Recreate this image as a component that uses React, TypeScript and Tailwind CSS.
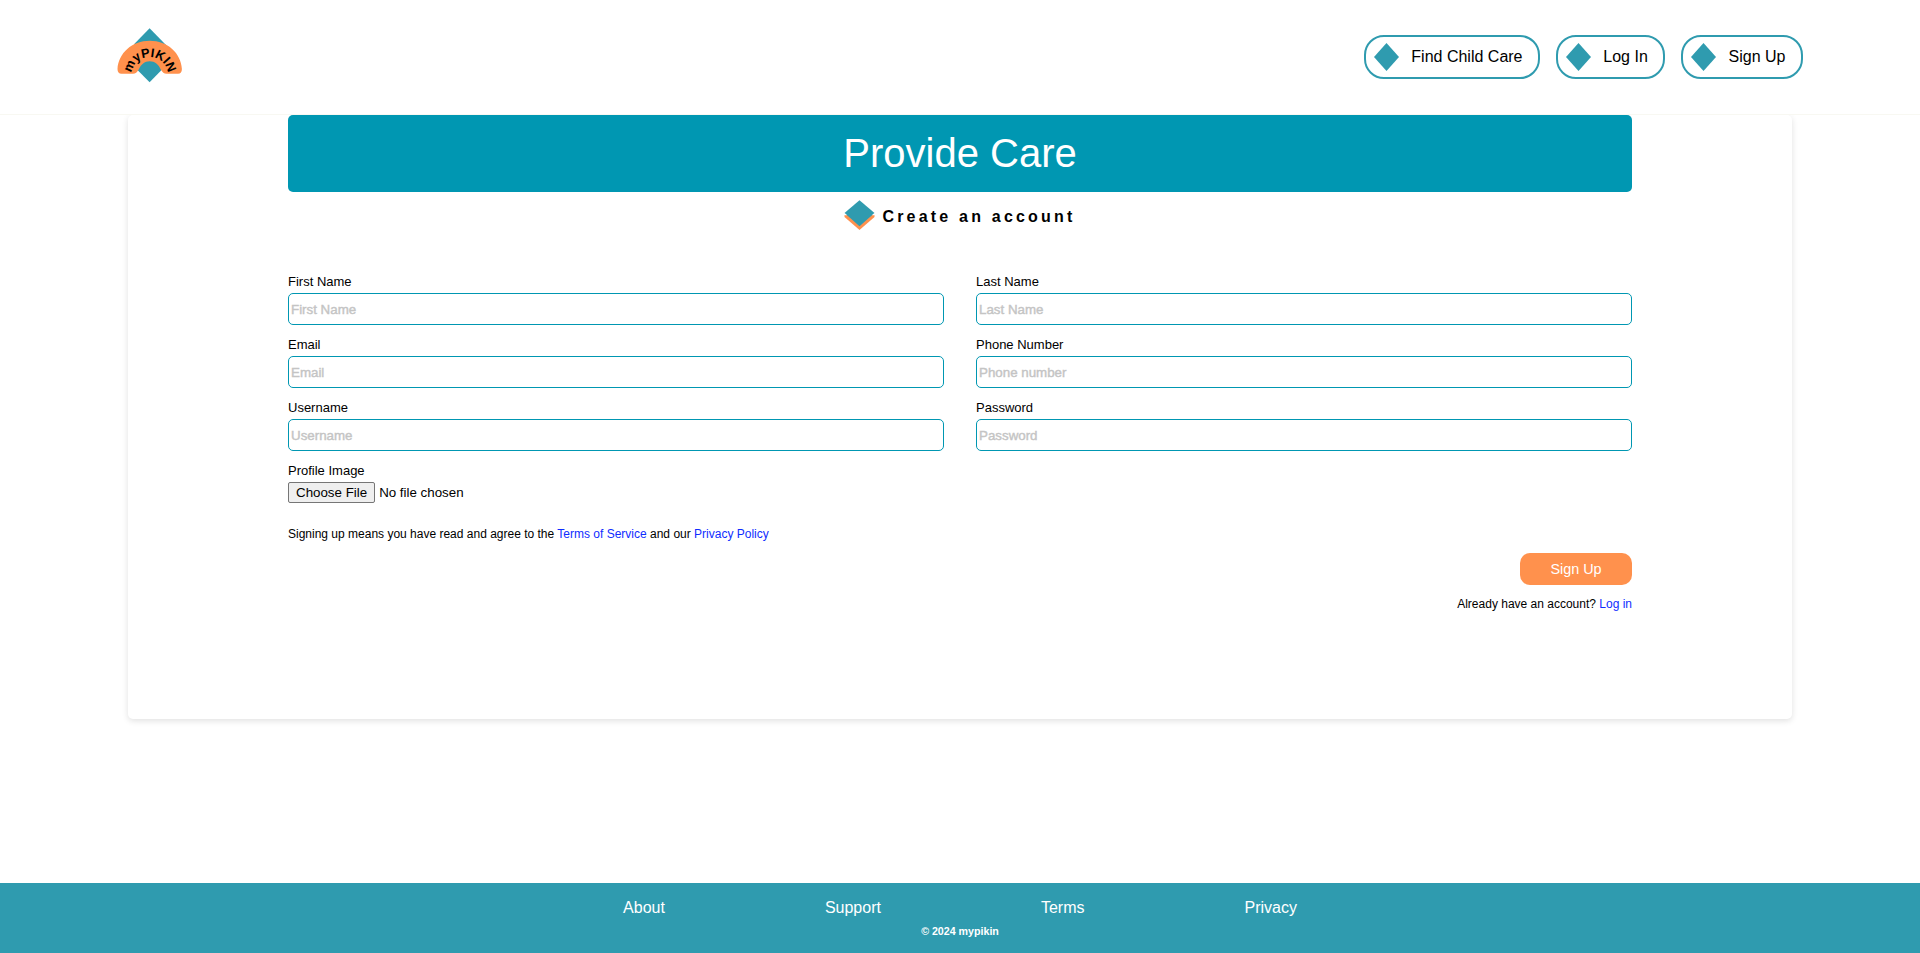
import type { ReactNode } from "react";

const FONT = "font-['Liberation_Sans',Arial,sans-serif]";

function Logo() {
  return (
    <svg width="66" height="56" viewBox="0 0 66 56" className="mb-0.5 block" aria-label="myPIKIN">
      <defs>
        <clipPath id="mid">
          <rect x="17" y="0" width="32" height="56" />
        </clipPath>
        <path id="arc" d="M14.4 47.3A18.300 18.300 0 0 1 51 47.300" />
      </defs>
      <path d="M32.600 0.300L59 27.300L32.600 54.300L6 27.300Z" fill="#2f9baf" clipPath="url(#mid)" />
      <path
        d="M4.500 45.700Q0.500 45.700 0.500 41C1.500 25 15 12.700 32.700 12.700C50.500 12.700 64 25 64.900 41Q64.900 45.700 61 45.700H49.500Q46 45.700 43.800 41.500C41.500 36.500 38 33.300 32.700 33.300C27.500 33.300 24 36.500 21.700 41.500Q19.500 45.700 16 45.700Z"
        fill="#ff914d"
      />
      <text className={FONT} fontSize="12.8" fontWeight="700" fill="#000">
        <textPath href="#arc" startOffset="50%" textAnchor="middle">
          myPIKIN
        </textPath>
      </text>
    </svg>
  );
}

function NavPill({ children }: { children: ReactNode }) {
  return (
    <a
      href="#"
      className="flex h-11 items-center gap-[12.8px] rounded-[20px] border-2 border-[#2f9baf] pr-[15.500px] pl-[7.5px]"
    >
      <svg width="25" height="28" viewBox="0 0 25 28">
        <path d="M12.500 0L25 14L12.500 28L0 14Z" fill="#2f9baf" />
      </svg>
      <span>{children}</span>
    </a>
  );
}

function Field({ label, placeholder, type = "text" }: { label: string; placeholder: string; type?: string }) {
  return (
    <label className="flex flex-col text-[13px]">
      <span className="mb-[5px] leading-[13px]">{label}</span>
      <input
        type={type}
        placeholder={placeholder}
        className="h-8 rounded-[5px] border border-[#0097b2] bg-white px-0.5 text-[13.333px] placeholder:text-[#c4c4c4] placeholder:[-webkit-text-stroke:0.4px_#c4c4c4]"
      />
    </label>
  );
}

export default function App() {
  return (
    <div className={`${FONT} flex h-[953px] flex-col overflow-hidden bg-white text-base text-black`}>
      <header className="flex h-[115px] shrink-0 items-center justify-between border-b border-[#f8f8f2] pr-[117px] pl-[117px]">
        <Logo />
        <nav className="flex gap-4">
          <NavPill>Find Child Care</NavPill>
          <NavPill>Log In</NavPill>
          <NavPill>Sign Up</NavPill>
        </nav>
      </header>

      <div className="overflow-hidden pb-4">
        <main className="mx-32 h-[604px] rounded-[5px] bg-white px-40 shadow-[0_2px_6px_rgba(0,0,0,0.12)]">
          <h1 className="flex h-[77px] items-center justify-center rounded-[5px] bg-[#0097b2] pb-0.5 text-[40px] text-white">
            Provide Care
          </h1>
          <div className="mt-2 flex items-center justify-center gap-[7.5px] pr-[0.5px]">
            <svg width="31" height="30" viewBox="0 0 31 30">
              <path d="M0.500 15L30.500 15L30.500 17L15.500 30L0.500 17Z" fill="#ff914d" />
              <path d="M15.500 0.200L30.500 13L15.500 26.200L0.500 13Z" fill="#2f9baf" />
              <path d="M0.500 13L3 15.200L0.500 15.200ZM30.500 13L28 15.200L30.500 15.200Z" fill="#fff" />
            </svg>
            <h2 className="pt-1 font-bold tracking-[0.2em]">Create an account</h2>
          </div>

          <form className="mt-[45px]">
            <div className="grid grid-cols-2 gap-x-8 gap-y-[13px]">
              <Field label="First Name" placeholder="First Name" />
              <Field label="Last Name" placeholder="Last Name" />
              <Field label="Email" placeholder="Email" type="email" />
              <Field label="Phone Number" placeholder="Phone number" type="tel" />
              <Field label="Username" placeholder="Username" />
              <Field label="Password" placeholder="Password" type="password" />
              <label className="flex flex-col text-[13px]">
                <span className="mb-[5px] leading-[13px]">Profile Image</span>
                <input
                  type="file"
                  className="h-[21px] text-[13.333px] leading-[15px] file:h-[21px] file:rounded-[2px] file:border file:border-solid file:border-[#767676] file:bg-[#efefef] file:px-[7px] file:text-[13.333px] file:leading-[15px]"
                />
              </label>
            </div>
            <p className="mt-[23px] text-xs">
              Signing up means you have read and agree to the{" "}
              <a href="#" className="text-[#0f2dff]">Terms of Service</a> and our{" "}
              <a href="#" className="text-[#0f2dff]">Privacy Policy</a>
            </p>
            <div className="mt-[11px] flex flex-col items-end gap-[11px]">
              <button type="button" className="h-8 w-28 rounded-[10px] bg-[#ff914d] pt-0.5 text-[14.4px] text-white">
                Sign Up
              </button>
              <p className="text-xs">
                Already have an account? <a href="#" className="text-[#0f2dff]">Log in</a>
              </p>
            </div>
          </form>
        </main>
      </div>

      <footer className="mt-auto flex h-[70px] shrink-0 flex-col items-center bg-[#2f9baf] pt-[13px] text-white">
        <nav className="flex gap-40">
          <a href="#">About</a>
          <a href="#">Support</a>
          <a href="#">Terms</a>
          <a href="#">Privacy</a>
        </nav>
        <p className="mt-[3px] text-[10.667px] leading-4 font-bold">© 2024 mypikin</p>
      </footer>
    </div>
  );
}
